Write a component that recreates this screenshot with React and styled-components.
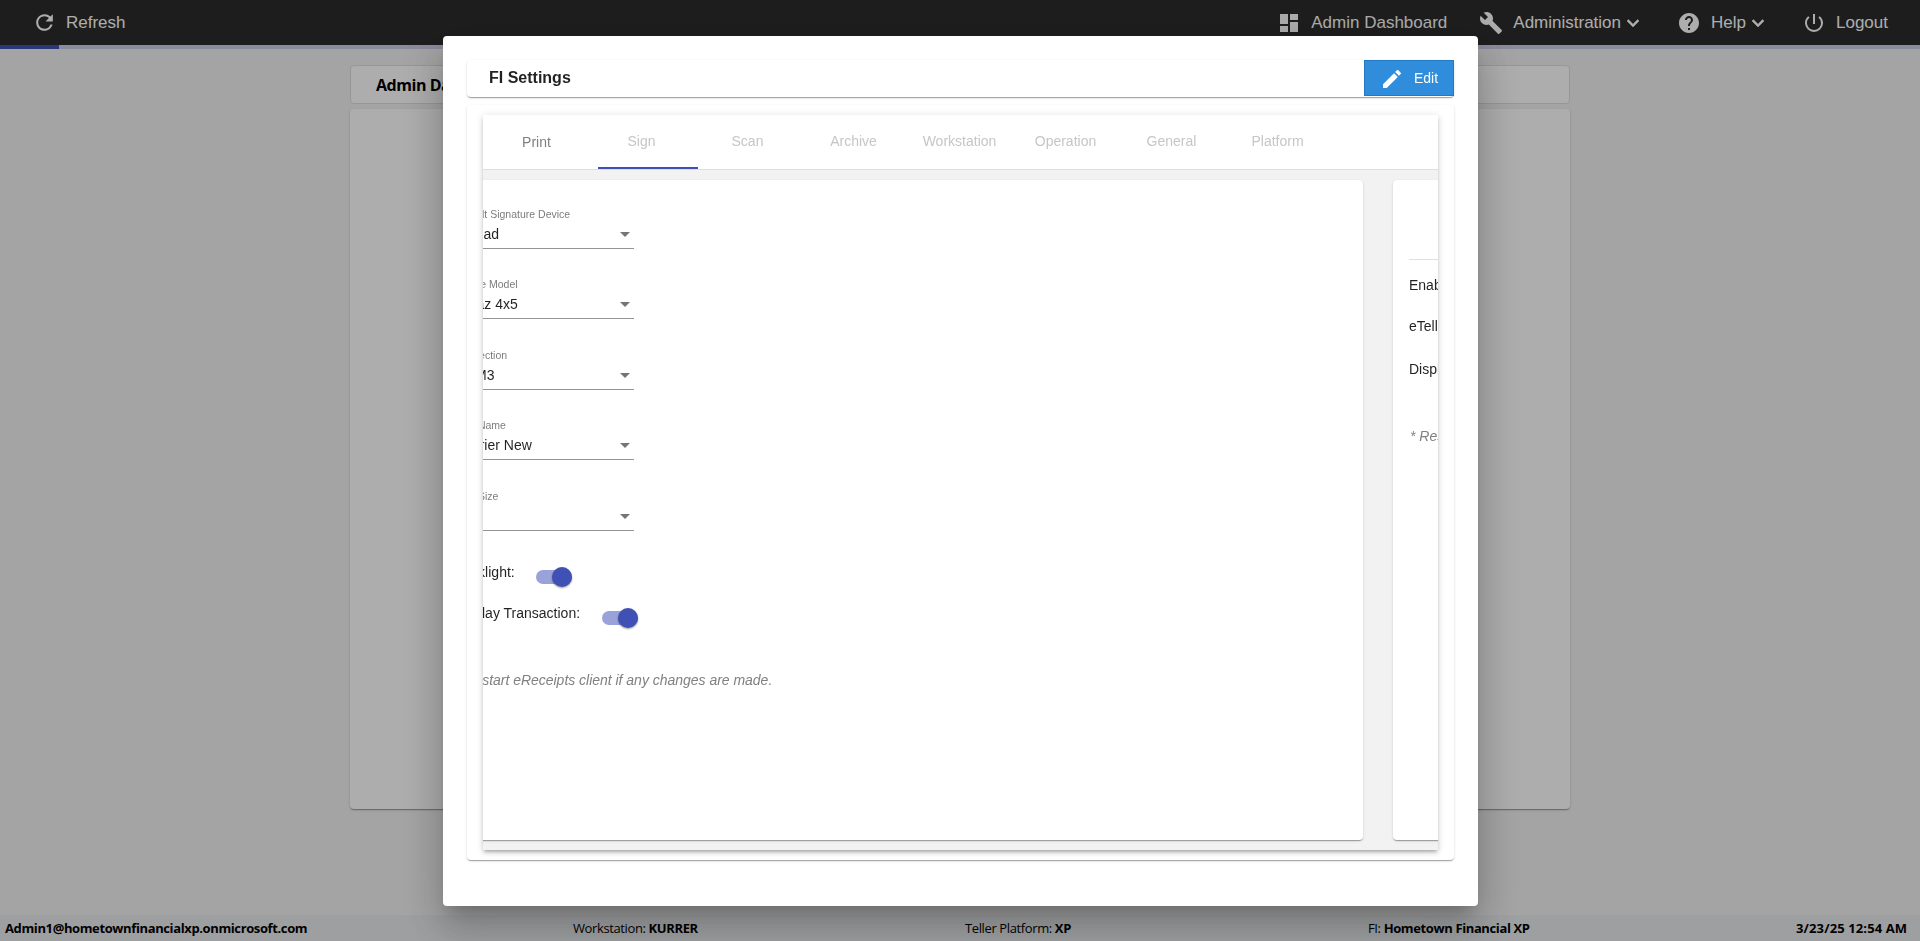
import React from 'react';
import styled, { createGlobalStyle } from 'styled-components';
import {
  MdBuild,
  MdDashboard,
  MdEdit,
  MdExpandMore,
  MdHelp,
  MdPowerSettingsNew,
  MdRefresh,
} from 'react-icons/md';

const GlobalStyle = createGlobalStyle`
  * {
    box-sizing: border-box;
  }

  body {
    margin: 0;
    overflow: hidden;
    background: #f2f2f2;
    font-family: 'Liberation Sans', Arial, sans-serif;
    font-size: 14px;
  }
`;

const Page = styled.div`
  height: 100vh;
  display: flex;
  flex-direction: column;
`;

const Header = styled.header`
  height: 45px;
  flex: none;
  background: #2c2c2c;
  color: #fff;
  display: flex;
  align-items: center;
  justify-content: space-between;
  padding: 0 32px;
`;

const HeaderGroup = styled.div`
  display: flex;
  align-items: center;
`;

const NavItem = styled.a`
  display: flex;
  align-items: center;
  font-size: 17px;
  line-height: 24px;
  margin-left: ${({ $offset }) => $offset || 0}px;

  svg {
    flex: none;
    font-size: ${({ $icon }) => $icon || 24}px;
  }
`;

const NavText = styled.span`
  margin-left: ${({ $gap }) => $gap}px;
`;

const Chevron = styled(MdExpandMore)`
  path:last-child {
    stroke: #fff;
    stroke-width: 0.5px;
  }
`;

const Progress = styled.div`
  height: 4px;
  flex: none;
  background: #cbcee9;
`;

const ProgressBar = styled.div`
  height: 4px;
  background: #3f51b5;
`;

const Main = styled.main`
  flex: 1;
  width: 1220px;
  margin: 0 auto;
  padding-top: 16px;
`;

const PageTitle = styled.div`
  height: 39px;
  border: 1px solid #dedede;
  border-radius: 4px;
  background: #fff;
  padding-left: 25px;
  font-family: 'Open Sans', 'Noto Sans', sans-serif;
  font-size: 16px;
  font-weight: 700;
  letter-spacing: -0.45px;
  line-height: 39px;
`;

const cardShadow = `
  0 2px 1px -1px rgba(0, 0, 0, 0.2),
  0 1px 1px 0 rgba(0, 0, 0, 0.14),
  0 1px 3px 0 rgba(0, 0, 0, 0.12)
`;

const PageCard = styled.div`
  height: 700px;
  margin-top: 5px;
  border-radius: 4px;
  background: #fff;
  box-shadow: ${cardShadow};
`;

const Footer = styled.footer`
  height: 26px;
  flex: none;
  display: grid;
  grid-template-columns: 568px 392px 403px 428px auto;
  padding-left: 5px;
  background: #e9ebed;
  font-family: 'Open Sans', 'Noto Sans', sans-serif;
  font-size: 13px;
  letter-spacing: -0.38px;
  line-height: 26px;
  white-space: nowrap;
`;

const Clock = styled.b`
  letter-spacing: 0.12px;
`;

const Backdrop = styled.div`
  position: fixed;
  inset: 0;
  display: flex;
  justify-content: center;
  align-items: flex-start;
  padding-top: 36px;
  background: rgba(0, 0, 0, 0.32);
`;

const Dialog = styled.div`
  width: 1035px;
  height: 870px;
  margin-left: 1px;
  padding: 24px;
  border-radius: 4px;
  background: #fff;
  color: rgba(0, 0, 0, 0.87);
  box-shadow:
    0 11px 15px -7px rgba(0, 0, 0, 0.2),
    0 24px 38px 3px rgba(0, 0, 0, 0.14),
    0 9px 46px 8px rgba(0, 0, 0, 0.12);
`;

const DialogBar = styled.div`
  height: 37px;
  display: flex;
  justify-content: space-between;
  border-radius: 4px;
  background: #fff;
  box-shadow: ${cardShadow};
`;

const DialogTitle = styled.h2`
  margin: 0;
  padding-left: 22px;
  font-size: 16px;
  line-height: 35px;
`;

const EditButton = styled.button`
  width: 90px;
  height: 36px;
  display: flex;
  align-items: center;
  padding: 0 0 0 15px;
  border: 1px solid #2579c0;
  background: #2f8ddc;
  color: #fff;
  font: 14px 'Liberation Sans', Arial, sans-serif;

  svg {
    font-size: 24px;
    margin: 2px 10px 0 0;
  }
`;

const DialogCard = styled.div`
  height: 755px;
  margin-top: 8px;
  padding: 10px 16px;
  border-radius: 4px;
  background: #fff;
  box-shadow: ${cardShadow};
`;

const TabPanel = styled.div`
  height: 735px;
  overflow: hidden;
  background: #f2f2f2;
  box-shadow:
    0 3px 3px -2px rgba(0, 0, 0, 0.2),
    0 3px 4px 0 rgba(0, 0, 0, 0.14),
    0 1px 8px 0 rgba(0, 0, 0, 0.12);
`;

const Tabs = styled.div`
  height: 55px;
  display: flex;
  border-bottom: 1px solid #dedede;
  background: #fff;
`;

const Tab = styled.div`
  width: 100px;
  margin-right: 6px;
  padding-right: ${({ $first }) => ($first ? 0 : 13)}px;
  padding-left: ${({ $first }) => ($first ? 7 : 0)}px;
  border-bottom: 2px solid ${({ $active }) => ($active ? '#3f51b5' : 'transparent')};
  color: ${({ $first }) => ($first ? '#808080' : '#c6c6c6')};
  line-height: ${({ $first }) => ($first ? 54 : 52)}px;
  text-align: center;

  &:first-child {
    margin-right: 15px;
  }
`;

const Slides = styled.div`
  display: flex;
  height: 680px;
  margin-left: -60px;
`;

const Slide = styled.section`
  flex: none;
  width: 955px;
  padding: 10px 15px;
`;

const SlideCard = styled.div`
  height: 660px;
  padding: 26px 16px;
  border-radius: 4px;
  background: #fff;
  box-shadow: ${cardShadow};
`;

const Field = styled.div`
  width: 180px;
  height: 43px;
  margin-bottom: 27.45px;
  border-bottom: 1px solid #949494;
`;

const FieldLabel = styled.div`
  color: rgba(0, 0, 0, 0.54);
  font-size: 10.5px;
  line-height: 16px;
`;

const FieldValue = styled.div`
  height: 24px;
  display: flex;
  align-items: center;
  justify-content: space-between;
  padding-right: 4px;
`;

const Arrow = styled.span`
  margin-top: 1px;
  border: 5px solid transparent;
  border-top-color: #757575;
  border-bottom: 0;
`;

const Toggles = styled.div`
  padding-top: 5.75px;
`;

const ToggleRow = styled.div`
  height: 41px;
  display: flex;
  align-items: flex-start;
  line-height: 16px;
`;

const Toggle = styled.span`
  width: 36px;
  height: 14px;
  display: flex;
  align-items: center;
  justify-content: flex-end;
  margin: 6px 0 0 ${({ $gap }) => $gap}px;
  border-radius: 8px;
  background: #9aa2da;
`;

const Thumb = styled.span`
  flex: none;
  width: 20px;
  height: 20px;
  border-radius: 50%;
  background: #3f51b5;
  box-shadow: 0 1px 2px rgba(0, 0, 0, 0.4);
`;

const Note = styled.p`
  margin: ${({ $top }) => $top}px 0 0 1px;
  color: #808080;
  font-style: italic;
  letter-spacing: -0.02px;
  line-height: 16px;
  white-space: nowrap;
`;

const Divider = styled.div`
  height: 1px;
  margin: 53px 0 17px;
  background: #e0e0e0;
`;

const Option = styled.div`
  height: ${({ $height }) => $height}px;
  line-height: 16px;
`;

const tabs = ['Print', 'Sign', 'Scan', 'Archive', 'Workstation', 'Operation', 'General', 'Platform'];

const fields = [
  { label: 'Default Signature Device', value: 'SigPad' },
  { label: 'Device Model', value: 'Topaz 4x5' },
  { label: 'Connection', value: 'COM3' },
  { label: 'Font Name', value: 'Courier New' },
  { label: 'Font Size', value: '' },
];

const App = () => {
  return (
    <>
      <GlobalStyle />
      <Page>
        <Header>
          <NavItem $icon={25}>
            <MdRefresh />
            <NavText $gap={9}>Refresh</NavText>
          </NavItem>
          <HeaderGroup>
            <NavItem>
              <MdDashboard />
              <NavText $gap={10}>Admin Dashboard</NavText>
            </NavItem>
            <NavItem $offset={32}>
              <MdBuild />
              <NavText $gap={10}>Administration</NavText>
              <Chevron />
            </NavItem>
            <NavItem $offset={32}>
              <MdHelp />
              <NavText $gap={10}>Help</NavText>
              <Chevron />
            </NavItem>
            <NavItem $offset={32}>
              <MdPowerSettingsNew />
              <NavText $gap={10}>Logout</NavText>
            </NavItem>
          </HeaderGroup>
        </Header>
        <Progress>
          <ProgressBar style={{ width: '3.05%' }} />
        </Progress>
        <Main>
          <PageTitle>Admin Dashboard</PageTitle>
          <PageCard />
        </Main>
        <Footer>
          <b>Admin1@hometownfinancialxp.onmicrosoft.com</b>
          <span>Workstation: <b>KURRER</b></span>
          <span>Teller Platform: <b>XP</b></span>
          <span>FI: <b>Hometown Financial XP</b></span>
          <Clock>3/23/25 12:54 AM</Clock>
        </Footer>
      </Page>

      <Backdrop>
        <Dialog>
          <DialogBar>
            <DialogTitle>FI Settings</DialogTitle>
            <EditButton>
              <MdEdit />
              Edit
            </EditButton>
          </DialogBar>
          <DialogCard>
            <TabPanel>
              <Tabs>
                {tabs.map((tab, i) => (
                  <Tab key={tab} $first={i === 0} $active={tab === 'Sign'}>
                    {tab}
                  </Tab>
                ))}
              </Tabs>
              <Slides>
                <Slide>
                  <SlideCard>
                    {fields.map(({ label, value }) => (
                      <Field key={label}>
                        <FieldLabel>{label}</FieldLabel>
                        <FieldValue>
                          <span>{value}</span>
                          <Arrow />
                        </FieldValue>
                      </Field>
                    ))}
                    <Toggles>
                      <ToggleRow>
                        Backlight:
                        <Toggle $gap={21}><Thumb /></Toggle>
                      </ToggleRow>
                      <ToggleRow>
                        Display Transaction:
                        <Toggle $gap={22}><Thumb /></Toggle>
                      </ToggleRow>
                    </Toggles>
                    <Note $top={26}>* Restart eReceipts client if any changes are made.</Note>
                  </SlideCard>
                </Slide>
                <Slide>
                  <SlideCard>
                    <Divider />
                    <Option $height={41}>Enabled:</Option>
                    <Option $height={43}>eTeller:</Option>
                    <Option $height={42}>Display Transaction:</Option>
                    <Note $top={25}>* Restart eReceipts client if any changes are made.</Note>
                  </SlideCard>
                </Slide>
              </Slides>
            </TabPanel>
          </DialogCard>
        </Dialog>
      </Backdrop>
    </>
  );
};

export default App;
